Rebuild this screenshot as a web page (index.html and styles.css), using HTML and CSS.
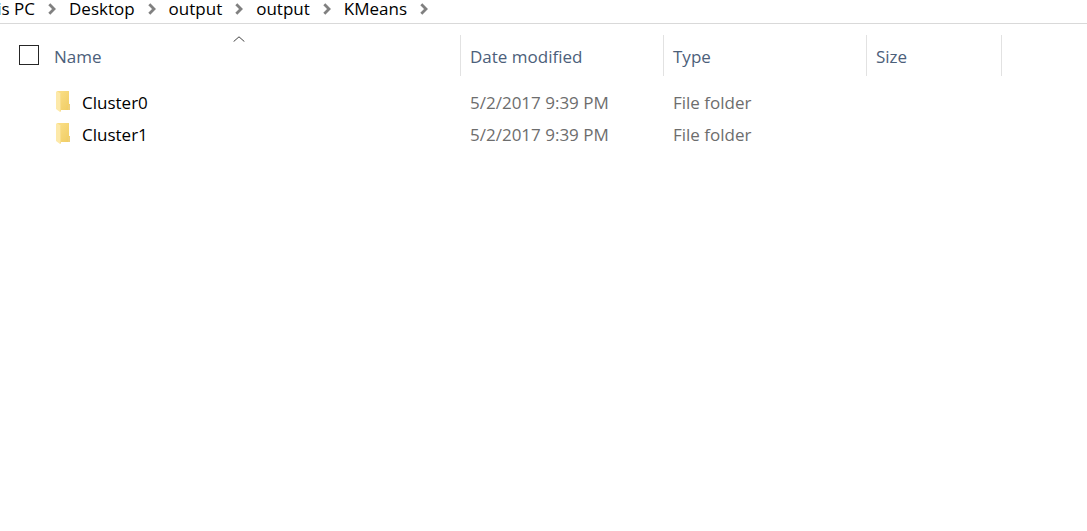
FILE: index.html
```html
<!DOCTYPE html>
<html lang="en">
<head>
<meta charset="utf-8">
<title>KMeans</title>
<link rel="stylesheet" href="styles.css">
</head>
<body>
<svg class="defs" width="0" height="0" aria-hidden="true">
  <defs>
    <linearGradient id="back" x1="0" y1="0" x2="1" y2="1"><stop offset="0" stop-color="#fbe08a"/><stop offset="1" stop-color="#f0cc62"/></linearGradient>
    <symbol id="chevron" viewBox="0 0 8 12"><path d="M1.3 1.3 6 6 1.3 10.7" fill="none" stroke="#808080" stroke-width="2.8"/></symbol>
    <symbol id="folder" viewBox="0 0 14 22">
      <path d="M1 0H13V13H14V19H3L1 18Z" fill="url(#back)"/>
      <path d="M12 14H14V19H12Z" fill="#efd079"/>
      <path d="M0 1 1 0 5 3V20L4 21 0 18Z" fill="#fde9a9"/>
      <path d="M4.5 3V20.5" stroke="#f5d67c" stroke-width=".6"/>
    </symbol>
  </defs>
</svg>
<nav class="crumbs" aria-label="Location">
  <span class="root"><a href="#">This PC</a></span>
  <svg class="chevron"><use href="#chevron"/></svg>
  <a href="#">Desktop</a>
  <svg class="chevron"><use href="#chevron"/></svg>
  <a href="#">output</a>
  <svg class="chevron"><use href="#chevron"/></svg>
  <a href="#">output</a>
  <svg class="chevron"><use href="#chevron"/></svg>
  <a href="#">KMeans</a>
  <svg class="chevron"><use href="#chevron"/></svg>
</nav>
<main>
  <table class="files">
    <colgroup><col class="col-name"><col class="col-date"><col class="col-type"><col class="col-size"><col></colgroup>
    <thead>
      <tr>
        <th scope="col" aria-sort="ascending">
          <div class="name-head"><input class="check" type="checkbox" id="all" aria-label="Select all"><span>Name</span></div>
          <svg class="sort" viewBox="0 0 12 6"><path d="M.6 5.6 6 .8 11.4 5.6" fill="none" stroke="#444"/></svg>
        </th>
        <th scope="col">Date modified</th>
        <th scope="col">Type</th>
        <th scope="col">Size</th>
        <td></td>
      </tr>
    </thead>
    <tbody>
      <tr><td><div class="file"><svg class="folder"><use href="#folder"/></svg><span>Cluster0</span></div></td><td>5/2/2017 9:39 PM</td><td>File folder</td><td></td><td></td></tr>
      <tr><td><div class="file"><svg class="folder"><use href="#folder"/></svg><span>Cluster1</span></div></td><td>5/2/2017 9:39 PM</td><td>File folder</td><td></td><td></td></tr>
    </tbody>
  </table>
</main>
</body>
</html>
```
FILE: styles.css
```css
body {
  margin: 0;
  background: #fff;
  color: #000;
  font: 17px/24px "Open Sans", "Noto Sans", sans-serif;
}
.defs { position: absolute; }
.crumbs {
  display: flex;
  align-items: center;
  gap: 13px;
  height: 23px;
  border-bottom: 1px solid #d9d9d9;
  line-height: 18px;
  white-space: nowrap;
}
.crumbs a { color: #000; text-decoration: none; padding-bottom: 6px; }
.root { display: flex; justify-content: flex-end; width: 35px; }
.chevron { width: 8px; height: 12px; margin-bottom: 6px; flex: none; }
.files {
  width: 100%;
  margin-top: 11px;
  border-collapse: separate;
  border-spacing: 0;
  table-layout: fixed;
}
.col-name { width: 461px; }
.col-date, .col-type { width: 203px; }
.col-size { width: 135px; }
.files th {
  position: relative;
  height: 41px;
  padding: 2px 0 0 9px;
  box-sizing: border-box;
  border-right: 1px solid #e2e2e2;
  color: #4c607a;
  font-weight: 400;
  text-align: left;
}
.files th:first-child { padding-left: 19px; }
.name-head { display: flex; align-items: center; gap: 15px; }
.check {
  appearance: none;
  width: 20px;
  height: 20px;
  margin: 0 0 3px;
  border: 1px solid #262626;
  background: #fff;
}
.sort { position: absolute; left: 233px; top: 1px; width: 12px; height: 6px; }
.files tbody::before { content: ""; display: block; height: 10px; }
.files tbody td { height: 30px; padding: 2px 0 0 9px; color: #6d6d6d; }
.files tbody td:first-child { padding-left: 56px; color: #000; }
.file { display: flex; align-items: center; gap: 12px; }
.folder { width: 14px; height: 22px; margin-bottom: 2px; }
```
